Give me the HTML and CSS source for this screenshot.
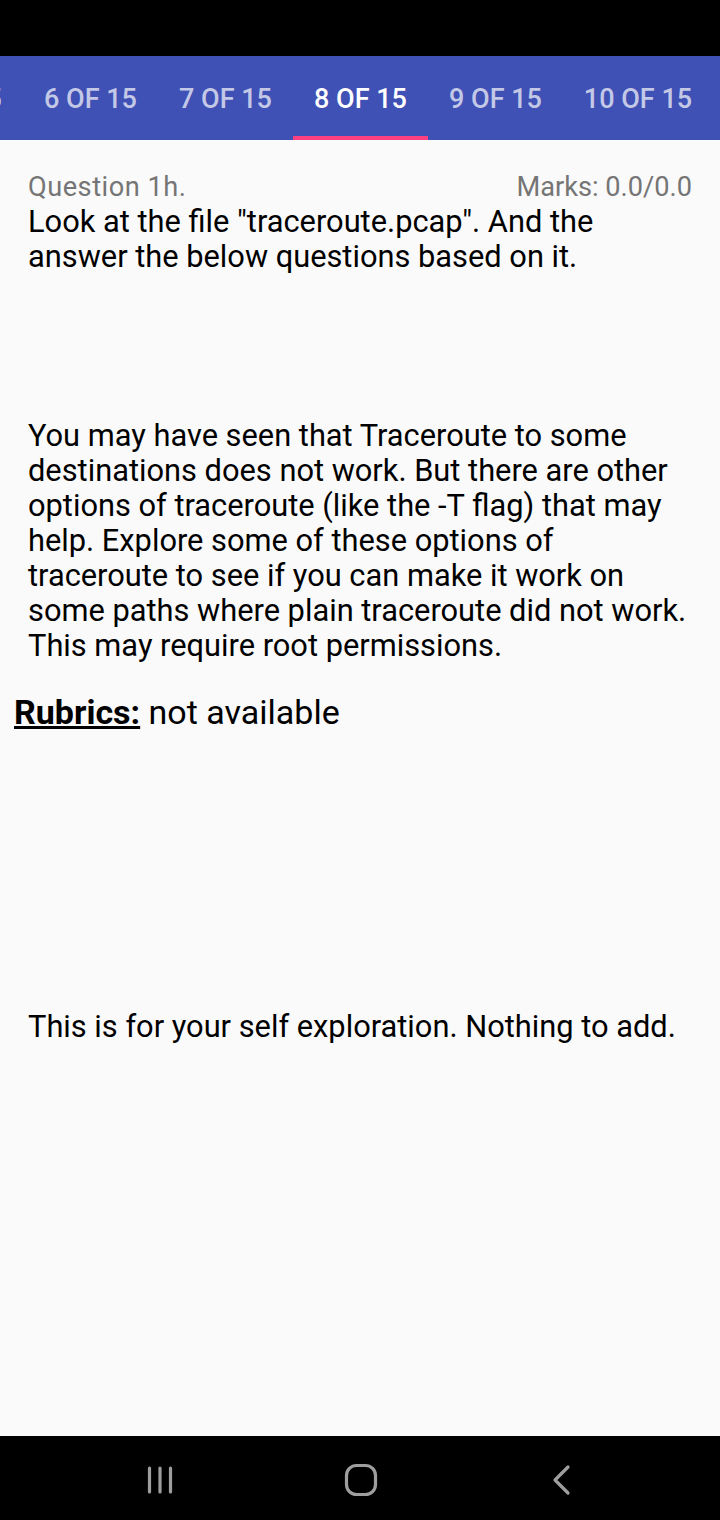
FILE: index.html
```html
<!DOCTYPE html>
<html>
<head>
<meta charset="utf-8">
<link rel="stylesheet" href="styles.css">
</head>
<body>
<div class="screen">
  <div class="status"></div>
  <div class="tabbar">
    <div class="tabs">
      <div class="tab">5 OF 15</div>
      <div class="tab">6 OF 15</div>
      <div class="tab">7 OF 15</div>
      <div class="tab active">8 OF 15</div>
      <div class="tab">9 OF 15</div>
      <div class="tab">10 OF 15</div>
    </div>
  </div>
  <main class="content">
    <div class="qhead">
      <span class="qlabel">Question 1h.</span>
      <span class="marks">Marks: 0.0/0.0</span>
    </div>
    <p class="text intro">Look at the file "traceroute.pcap". And the answer the below questions based on it.</p>
    <p class="text question">You may have seen that Traceroute to some destinations does not work. But there are other options of traceroute (like the -T flag) that may help. Explore some of these options of traceroute to see if you can make it work on some paths where plain traceroute did not work. This may require root permissions.</p>
    <div class="rubrics"><span class="rlabel">Rubrics:</span> not available</div>
    <p class="text answer">This is for your self exploration. Nothing to add.</p>
  </main>
  <nav class="navbar">
    <svg class="nav-icon" width="40" height="40" viewBox="0 0 40 40"><g stroke="#9e9e9e" stroke-width="3.2" stroke-linecap="round" fill="none"><line x1="9.5" y1="8" x2="9.5" y2="32"/><line x1="20" y1="8" x2="20" y2="32"/><line x1="30.5" y1="8" x2="30.5" y2="32"/></g></svg>
    <svg class="nav-icon" width="40" height="40" viewBox="0 0 40 40"><rect x="5.5" y="5.5" width="29" height="29" rx="10" stroke="#9e9e9e" stroke-width="3.2" fill="none"/></svg>
    <svg class="nav-icon" width="40" height="40" viewBox="0 0 40 40"><polyline points="26,7 13,20 26,33" stroke="#9e9e9e" stroke-width="3.2" stroke-linecap="round" stroke-linejoin="round" fill="none"/></svg>
  </nav>
</div>
</body>
</html>
```

FILE: styles.css
```css
* { box-sizing: border-box; }
html, body { margin: 0; padding: 0; }
body {
  width: 720px;
  height: 1520px;
  background: #fafafa;
  font-family: Roboto, "Noto Sans", sans-serif;
  overflow: hidden;
}
.screen {
  display: flex;
  flex-direction: column;
  height: 1520px;
}
.status {
  height: 56px;
  background: #000;
  flex: none;
}
.tabbar {
  height: 84px;
  background: #3f51b5;
  overflow: hidden;
  flex: none;
}
.tabs {
  display: flex;
  height: 84px;
  margin-left: -112px;
}
.tab {
  flex: none;
  height: 84px;
  width: 135px;
  display: flex;
  align-items: center;
  justify-content: center;
  font-size: 27px;
  font-weight: 500;
  color: rgba(255,255,255,0.7);
  border-bottom: 4px solid transparent;
  padding-top: 6px;
  white-space: nowrap;
}
.tab:last-child { width: 150px; }
.tab.active {
  color: #fff;
  border-bottom-color: #ff4081;
}
.content {
  flex: 1;
  padding: 29px 0 0 0;
}
.qhead {
  display: flex;
  justify-content: space-between;
  align-items: baseline;
  padding: 0 28px 0 28px;
  font-size: 27.2px;
  color: #757575;
  line-height: 36px;
}
.qlabel { letter-spacing: 0.5px; }
.text {
  margin: 0;
  padding: 0 28px;
  font-size: 30.8px;
  line-height: 35px;
  color: #000;
}
.intro { margin-top: -1px; }
.question { margin-top: 144px; }
.rubrics {
  margin-top: 29px;
  padding-left: 14px;
  font-size: 34px;
  line-height: 40px;
  color: #000;
}
.rlabel {
  font-weight: 700;
  text-decoration: underline;
}
.answer { margin-top: 277px; }
.navbar {
  height: 84px;
  flex: none;
  background: #000;
  display: flex;
  align-items: center;
  justify-content: space-between;
  padding: 4px 138px 0 140px;
}
.nav-icon { display: block; }
```
